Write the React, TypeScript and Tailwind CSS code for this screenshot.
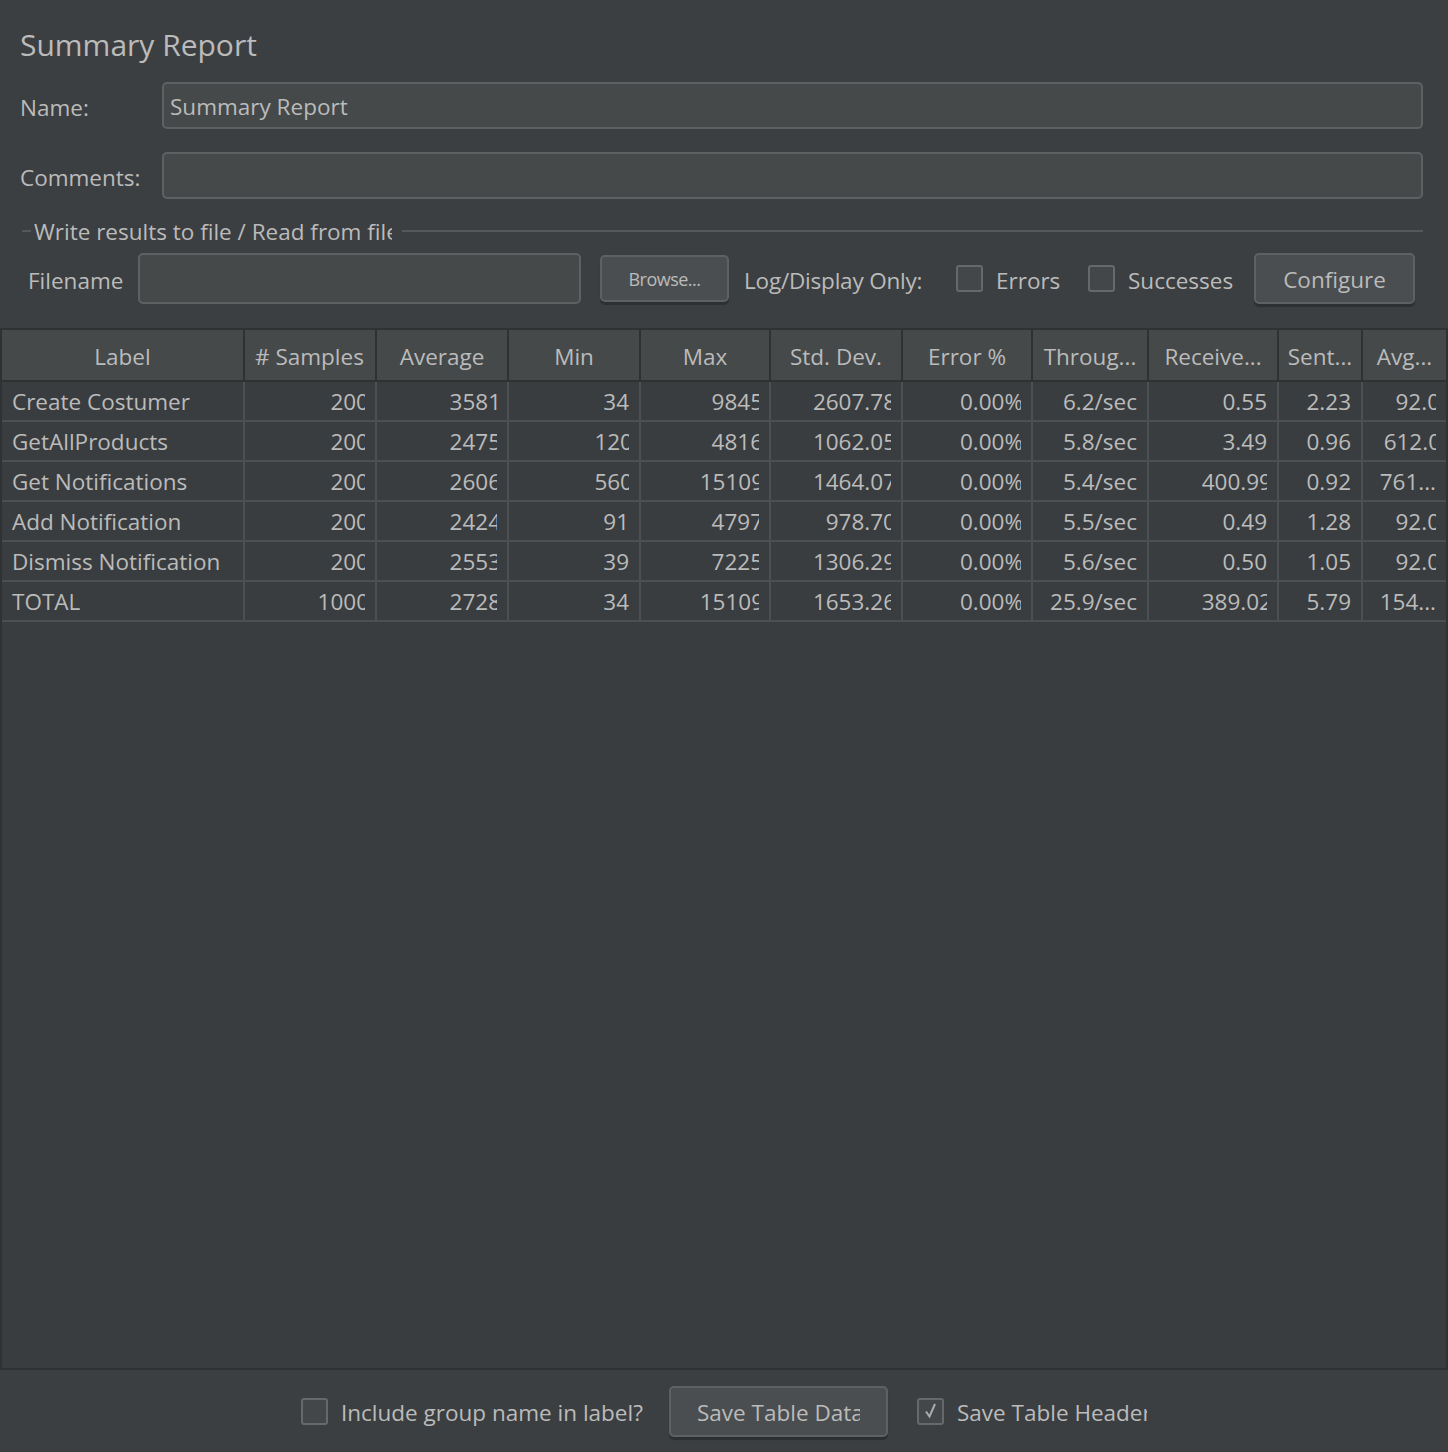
import React from 'react';

const cols = [
  { name: 'Label', w: 'w-[243px]' },
  { name: '# Samples', w: 'w-[132px]' },
  { name: 'Average', w: 'w-[132px]' },
  { name: 'Min', w: 'w-[132px]' },
  { name: 'Max', w: 'w-[130px]' },
  { name: 'Std. Dev.', w: 'w-[132px]' },
  { name: 'Error %', w: 'w-[130px]' },
  { name: 'Throug...', w: 'w-[116px]' },
  { name: 'Receive...', w: 'w-[130px]' },
  { name: 'Sent...', w: 'w-[84px]' },
  { name: 'Avg...', w: 'w-[83px]' },
];

const rows = [
  ['Create Costumer', '200', '3581', '34', '9845', '2607.78', '0.00%', '6.2/sec', '0.55', '2.23', '92.0'],
  ['GetAllProducts', '200', '2475', '120', '4816', '1062.05', '0.00%', '5.8/sec', '3.49', '0.96', '612.0'],
  ['Get Notifications', '200', '2606', '560', '15109', '1464.07', '0.00%', '5.4/sec', '400.99', '0.92', '761...'],
  ['Add Notification', '200', '2424', '91', '4797', '978.70', '0.00%', '5.5/sec', '0.49', '1.28', '92.0'],
  ['Dismiss Notification', '200', '2553', '39', '7225', '1306.29', '0.00%', '5.6/sec', '0.50', '1.05', '92.0'],
  ['TOTAL', '1000', '2728', '34', '15109', '1653.26', '0.00%', '25.9/sec', '389.02', '5.79', '154...'],
];

// java clips the last glyph of longer values a little
function clipFor(v: string, col: number) {
  if (v.endsWith('...') || v.endsWith('/sec')) return 0;
  if (v.length <= 2) return 0;
  if (col === 6) return 2;
  if ((col === 8 || col === 9) && v.length <= 4) return 0;
  return v.length >= 5 ? 5 : 4;
}

function Checkbox({ checked = false }: { checked?: boolean }) {
  return (
    <div className="w-[27px] h-[27px] shrink-0 rounded-[3px] border-2 border-[#66696b] bg-[#43474a] flex items-center justify-center">
      {checked && (
        <svg width="18" height="18" viewBox="0 0 18 18" fill="none">
          <path d="M4 9.5 L7.5 14.5 L13 2" stroke="#a9acae" strokeWidth="2" />
        </svg>
      )}
    </div>
  );
}

function Btn({ children, className = '' }: { children: React.ReactNode; className?: string }) {
  return (
    <div
      className={`shrink-0 flex items-center rounded-[5px] border-2 border-[#5e6163] bg-[#4a4e50] shadow-[0_3px_1px_rgba(0,0,0,0.25)] ${className}`}
    >
      {children}
    </div>
  );
}

export default function App() {
  return (
    <div
      className="w-[1448px] h-[1452px] bg-[#3c3f41] text-[#bbbbbb] flex flex-col overflow-hidden text-[22.5px]"
      style={{ fontFamily: '"Open Sans", "Noto Sans", sans-serif' }}
    >
      <div className="px-[20px] pt-[24px]">
        <div className="text-[30px] leading-[42px] h-[42px]">Summary Report</div>
        <div className="flex items-center mt-[16px] h-[47px]">
          <div className="w-[142px] pt-[4px]">Name:</div>
          <div className="flex-1 mr-[5px] h-[47px] rounded-[5px] border-2 border-[#5e6163] bg-[#45494a] flex items-center px-[6px] pt-[3px]">
            Summary Report
          </div>
        </div>
        <div className="flex items-center mt-[23px] h-[47px]">
          <div className="w-[142px] pt-[4px]">Comments:</div>
          <div className="flex-1 mr-[5px] h-[47px] rounded-[5px] border-2 border-[#5e6163] bg-[#45494a]" />
        </div>
        <div className="flex items-center mt-[16px] h-[32px] ml-[2px] mr-[5px]">
          <div className="w-[9px] h-[2px] bg-[#55585a]" />
          <div className="w-[358px] ml-[3px] overflow-hidden whitespace-nowrap leading-[32px] pt-[2px]">
            Write results to file / Read from file
          </div>
          <div className="flex-1 ml-[10px] h-[2px] bg-[#55585a]" />
        </div>
        <div className="flex items-center mt-[6px] h-[51px] ml-[8px]">
          <div className="w-[110px] pt-[4px]">Filename</div>
          <div className="w-[443px] h-[51px] rounded-[5px] border-2 border-[#5e6163] bg-[#45494a]" />
          <Btn className="ml-[19px] w-[129px] h-[47px] justify-center text-[18px] tracking-[-0.5px] pt-[2px]">Browse...</Btn>
          <div className="ml-[15px] w-[187px] whitespace-nowrap pt-[4px] tracking-[-0.2px]">Log/Display Only:</div>
          <div className="ml-[25px]">
            <Checkbox />
          </div>
          <div className="ml-[13px] w-[92px] pt-[4px]">Errors</div>
          <Checkbox />
          <div className="ml-[13px] pt-[4px]">Successes</div>
          <Btn className="ml-auto mr-[13px] w-[161px] h-[51px] justify-center pt-[3px]">Configure</Btn>
        </div>
      </div>

      <div className="mt-[24px] flex-1 flex flex-col bg-[#3a3d3f] border-t-2 border-[#2f3133] border-l-2 border-r-2 border-b-2">
        <div className="flex h-[52px] bg-[#45494a] border-b-2 border-[#2f3133]">
          {cols.map((c, i) => (
            <div
              key={c.name}
              className={`${c.w} shrink-0 h-full flex items-center justify-center overflow-hidden whitespace-nowrap pt-[4px] ${
                i < cols.length - 1 ? 'border-r-2 border-[#2f3133]' : ''
              }`}
            >
              <span className={i === 1 ? 'block w-[110px] overflow-hidden' : ''}>{c.name}</span>
            </div>
          ))}
        </div>
        {rows.map((r) => (
          <div key={r[0]} className="flex h-[40px] border-b-2 border-[#4d5052]">
            {r.map((v, i) => (
              <div
                key={i}
                className={`${cols[i].w} shrink-0 h-full flex items-center overflow-hidden whitespace-nowrap pt-[1px] ${
                  i < cols.length - 1 ? 'border-r-2 border-[#4d5052]' : ''
                } ${i === 0 ? 'pl-[10px]' : 'pr-[10px]'}`}
              >
                {i === 0 ? (
                  v
                ) : (
                  <div className="flex-1 overflow-hidden">
                    <div className="text-right" style={{ marginRight: -clipFor(v, i) }}>
                      {v}
                    </div>
                  </div>
                )}
              </div>
            ))}
          </div>
        ))}
      </div>

      <div className="h-[82px] shrink-0 flex items-center justify-center">
        <Checkbox />
        <div className="ml-[13px] w-[306px] overflow-hidden whitespace-nowrap pt-[3px]">
          Include group name in label?
        </div>
        <Btn className="ml-[22px] w-[219px] h-[51px] px-[26px] pt-[3px]">
          <div className="w-[164px] overflow-hidden whitespace-nowrap">Save Table Data</div>
        </Btn>
        <div className="ml-[29px]">
          <Checkbox checked />
        </div>
        <div className="ml-[13px] w-[190px] overflow-hidden whitespace-nowrap pt-[3px]">Save Table Header</div>
      </div>
    </div>
  );
}
